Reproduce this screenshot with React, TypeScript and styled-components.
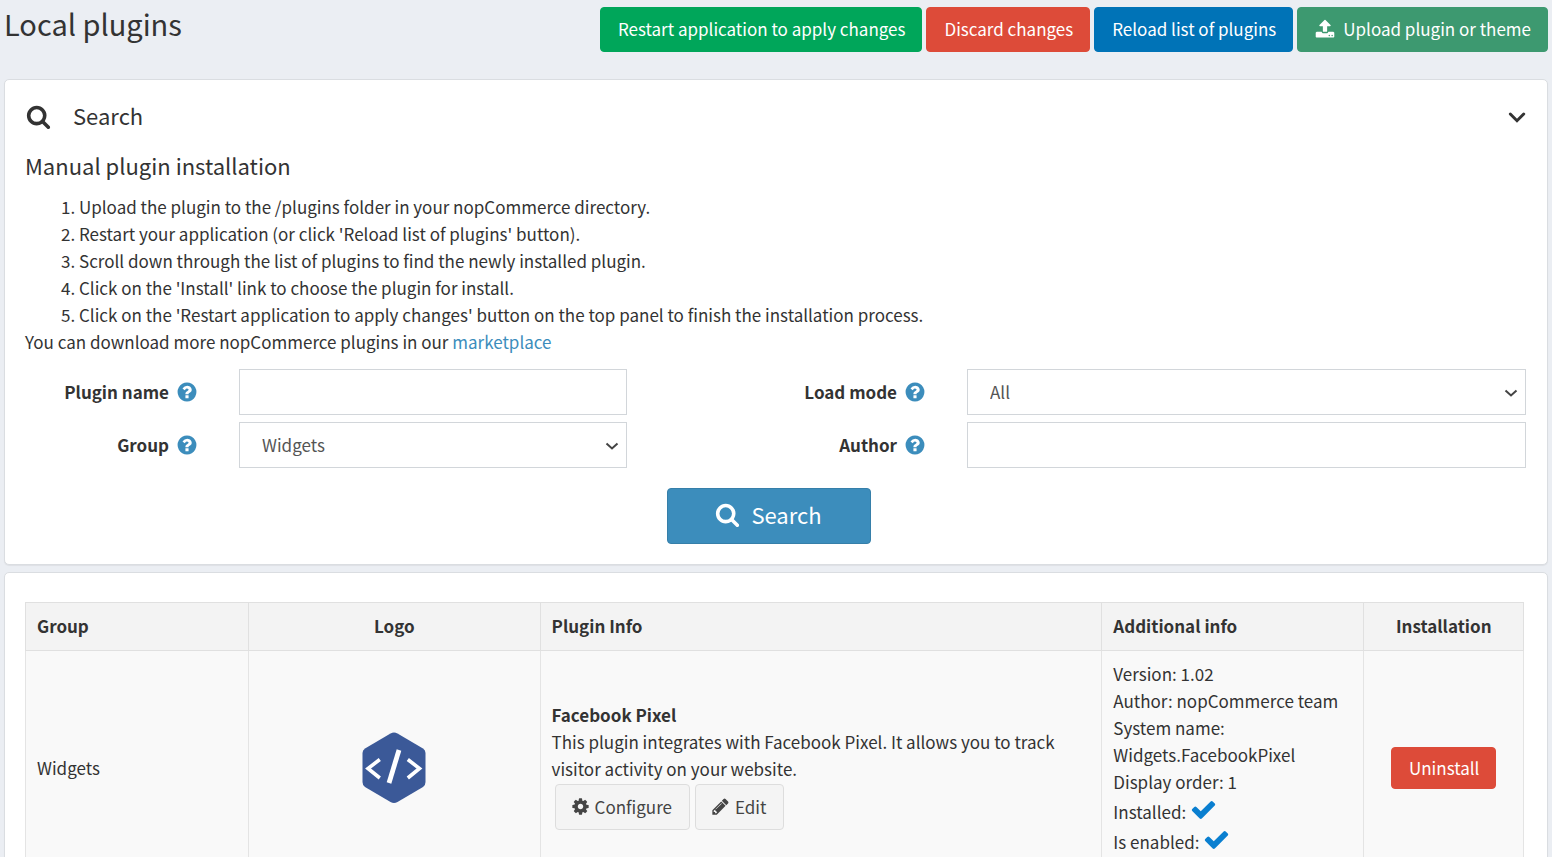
import React from "react";
import styled, { createGlobalStyle, css } from "styled-components";

const GlobalStyle = createGlobalStyle`
  *, *::before, *::after { box-sizing: border-box; }
  body {
    margin: 0;
    background: #ebeef3;
    color: #333;
    font-family: "Source Sans Pro", "Noto Sans CJK SC", "Noto Sans", sans-serif;
    font-size: 17px;
    line-height: 27px;
  }
  button, input, select { font: inherit; }
`;

const ICONS = {
  search:
    "M1216 832q0-185-131.5-316.5t-316.5-131.5-316.5 131.5-131.5 316.5 131.5 316.5 316.5 131.5 316.5-131.5 131.5-316.5zm512 832q0 52-38 90t-90 38q-54 0-90-38l-343-342q-179 124-399 124-143 0-273.5-55.5t-225-150-150-225-55.5-273.5 55.5-273.5 150-225 225-150 273.5-55.5 273.5 55.5 225 150 150 225 55.5 273.5q0 220-124 399l343 343q37 37 37 90z",
  upload:
    "M1344 1472q0-26-19-45t-45-19-45 19-19 45 19 45 45 19 45-19 19-45zm256 0q0-26-19-45t-45-19-45 19-19 45 19 45 45 19 45-19 19-45zm128-224v320q0 40-28 68t-68 28h-1472q-40 0-68-28t-28-68v-320q0-40 28-68t68-28h427q21 56 70.5 92t110.5 36h256q61 0 110.5-36t70.5-92h427q40 0 68 28t28 68zm-325-648q-17 40-59 40h-256v448q0 26-19 45t-45 19h-256q-26 0-45-19t-19-45v-448h-256q-42 0-59-40-17-39 14-69l448-448q18-19 45-19t45 19l448 448q31 30 14 69z",
  question:
    "M1024 1376v-192q0-14-9-23t-23-9h-192q-14 0-23 9t-9 23v192q0 14 9 23t23 9h192q14 0 23-9t9-23zm256-672q0-88-55.5-163t-138.5-116-170-41q-243 0-371 213-15 24 8 42l132 100q7 6 19 6 16 0 25-12 53-68 86-92 34-24 86-24 48 0 85.5 26t37.5 59q0 38-20 61t-68 45q-63 28-115.5 86.5t-52.5 125.5v36q0 14 9 23t23 9h192q14 0 23-9t9-23q0-19 21.5-49.5t54.5-49.5q32-18 49-28.5t46-35 44.5-48 28-60.5 12.5-81zm384 192q0 209-103 385.5t-279.5 279.5-385.5 103-385.5-103-279.5-279.5-103-385.5 103-385.5 279.5-279.5 385.5-103 385.5 103 279.5 279.5 103 385.5z",
  cog:
    "M1152 896q0-106-75-181t-181-75-181 75-75 181 75 181 181 75 181-75 75-181zm512-109v222q0 12-8 23t-20 13l-185 28q-19 54-39 91 35 50 107 138 10 12 10 25t-9 23q-27 37-99 108t-94 71q-12 0-26-9l-138-108q-44 23-91 38-16 136-29 186-7 28-36 28h-222q-14 0-24.5-8.5t-11.5-21.5l-28-184q-49-16-90-37l-141 107q-10 9-25 9-14 0-25-11-126-114-165-168-7-10-7-23 0-12 8-23 15-21 51-66.5t54-70.5q-27-50-41-99l-183-27q-13-2-21-12.5t-8-23.5v-222q0-12 8-23t19-13l186-28q14-46 39-92-40-57-107-138-10-12-10-24 0-10 9-23 26-36 98.5-107.5t94.5-71.5q13 0 26 10l138 107q44-23 91-38 16-136 29-186 7-28 36-28h222q14 0 24.5 8.5t11.5 21.5l28 184q49 16 90 37l142-107q9-9 24-9 13 0 25 10 129 119 165 170 7 8 7 22 0 12-8 23-15 21-51 66.5t-54 70.5q26 50 41 98l183 28q13 2 21 12.5t8 23.5z",
  pencil:
    "M491 1536l91-91-235-235-91 91v107h128v128h107zm523-928q0-22-22-22-10 0-17 7l-542 542q-7 7-7 17 0 22 22 22 10 0 17-7l542-542q7-7 7-17zm-54-192l416 416-832 832h-416v-416zm683 96q0 53-37 90l-166 166-416-416 166-165q36-38 90-38 53 0 91 38l235 234q37 39 37 91z",
  check:
    "M1671 566q0 40-28 68l-724 724-136 136q-28 28-68 28t-68-28l-136-136-362-362q-28-28-28-68t28-68l136-136q28-28 68-28t68 28l294 295 656-657q28-28 68-28t68 28l136 136q28 28 28 68z",
};

const Svg = styled.svg`
  flex: none;
  fill: currentColor;
`;

function Icon({ name, size }: { name: keyof typeof ICONS; size: number }) {
  return (
    <Svg width={size} height={size} viewBox="0 0 1792 1792" aria-hidden="true">
      <path d={ICONS[name]} />
    </Svg>
  );
}

const Page = styled.main`
  display: flex;
  flex-direction: column;
  gap: 7px;
  height: 100vh;
  padding: 0 4px;
  overflow: hidden;
`;

const Header = styled.header`
  display: flex;
  flex: none;
  justify-content: space-between;
  align-items: flex-start;
  padding: 7px 0 20px;
`;

const Title = styled.h1`
  margin: 0;
  font-size: 29px;
  font-weight: 400;
  line-height: 32px;
`;

const Actions = styled.div`
  display: flex;
  gap: 4px;
`;

type Tone = "success" | "danger" | "primary" | "upload" | "info" | "plain";

const tones: Record<Tone, [string, string, string]> = {
  success: ["#00a65a", "#00a65a", "#fff"],
  danger: ["#dd4b39", "#dd4b39", "#fff"],
  primary: ["#0073b7", "#0073b7", "#fff"],
  upload: ["#3d9970", "#3d9970", "#fff"],
  info: ["#3c8dbc", "#367fa9", "#fff"],
  plain: ["#f4f4f4", "#ddd", "#444"],
};

const sizes = {
  small: css`
    padding: 6px 16px 7px 17px;
  `,
  medium: css`
    gap: 8px;
    padding: 7px 16px 9px 17px;
  `,
  inline: css`
    gap: 5px;
    padding: 8px 17px 9px 15px;
  `,
  large: css`
    gap: 11px;
    padding: 12px 48px 16px 47px;
    font-size: 22px;
    line-height: 26px;
  `,
};

const Button = styled.button<{ $tone: Tone; $size?: keyof typeof sizes }>`
  display: inline-flex;
  align-items: center;
  border: 1px solid ${(p) => tones[p.$tone][1]};
  border-radius: 4px;
  background: ${(p) => tones[p.$tone][0]};
  color: ${(p) => tones[p.$tone][2]};
  white-space: nowrap;
  cursor: pointer;
  ${(p) => sizes[p.$size ?? "medium"]}
`;

const Panel = styled.section`
  flex: none;
  padding: 20px 21px 20px 20px;
  border: 1px solid #dadde1;
  border-radius: 5px;
  background: #fff;
  box-shadow: 0 1px 1px rgba(0, 0, 0, 0.06);
`;

const PanelToggle = styled.button`
  display: flex;
  align-items: center;
  gap: 22px;
  width: 100%;
  padding: 0 0 0 1px;
  border: 0;
  background: none;
  color: inherit;
  font-size: 22px;
  line-height: 30px;
  text-align: left;
  cursor: pointer;
`;

const ToggleLabel = styled.span`
  flex: 1;
  padding-bottom: 2px;
`;

const Subheading = styled.h2`
  margin: 17px 0 12px;
  font-size: 22px;
  font-weight: 400;
  line-height: 32px;
`;

const Steps = styled.ol`
  margin: 0;
  padding-left: 54px;
`;

const Text = styled.p`
  margin: 0;
`;

const Link = styled.a`
  color: #3c8dbc;
  text-decoration: none;
`;

const Filters = styled.form`
  display: grid;
  grid-template-columns: 173px 388px minmax(0, 258px) minmax(0, 1fr);
  column-gap: 41px;
  row-gap: 7px;
  align-items: center;
  margin-top: 14px;
`;

const FieldLabel = styled.label`
  display: flex;
  justify-content: flex-end;
  align-items: center;
  gap: 7px;
  font-weight: 700;

  svg {
    color: #3c8dbc;
  }
`;

const LabelText = styled.span`
  padding-bottom: 2px;
`;

const control = css`
  width: 100%;
  height: 46px;
  border: 1px solid #d2d6da;
  border-radius: 0;
  background: #fff;
  color: #555;
`;

const TextInput = styled.input`
  ${control}
  padding: 0 16px;
`;

const SelectWrap = styled.div`
  display: grid;
  align-items: center;

  > * {
    grid-area: 1 / 1;
  }

  > svg {
    justify-self: end;
    margin-right: 8px;
    pointer-events: none;
  }
`;

const Select = styled.select`
  ${control}
  padding: 0 22px 2px;
  appearance: none;
`;

const SubmitRow = styled.div`
  display: flex;
  grid-column: 1 / -1;
  justify-content: center;
  margin: 13px 13px 0 0;
`;

const TablePanel = styled(Panel)`
  padding: 29px 23px 20px 20px;
`;

const Table = styled.table`
  width: 100%;
  border-collapse: collapse;
  table-layout: fixed;
`;

const HeadCell = styled.th<{ $center?: boolean }>`
  height: 48px;
  padding: 9px 11px 11px;
  border: 1px solid #e0e0e0;
  background: #f3f3f3;
  text-align: ${(p) => (p.$center ? "center" : "left")};
`;

const Row = styled.tr`
  height: 236px;
`;

const Cell = styled.td<{ $center?: boolean; $top?: boolean }>`
  padding: 9px 11px 11px;
  border: 1px solid #e4e4e4;
  background: #f9f9f9;
  text-align: ${(p) => (p.$center ? "center" : "left")};
  vertical-align: ${(p) => (p.$top ? "top" : "middle")};

  > svg {
    display: block;
    margin: 0 auto;
  }
`;

const CellActions = styled.div`
  display: flex;
  gap: 5px;
  padding: 2px 3px 4px;
`;

const Status = styled.div`
  display: flex;
  align-items: center;
  gap: 4px;
  height: 30px;
  padding-top: 2px;

  svg {
    margin-bottom: 4px;
    color: #0a7fd0;
  }
`;

function HeaderChevron() {
  return (
    <svg width="18" height="18" viewBox="0 0 18 18" aria-hidden="true">
      <path d="M2.300 7 L9 13.700 L15.700 7" fill="none" stroke="currentColor" strokeWidth="3" strokeLinecap="round" />
    </svg>
  );
}

function SelectChevron() {
  return (
    <svg width="14" height="14" viewBox="0 0 14 14" aria-hidden="true">
      <path d="M1.500 5.500 L7 10.500 L12.500 5.500" fill="none" stroke="#444" strokeWidth="2" />
    </svg>
  );
}

function PluginLogo() {
  return (
    <svg width="64" height="72" viewBox="0 0 64 72" role="img" aria-label="Facebook Pixel">
      <path
        d="M28.500 1.500 Q32 -0.500 35.500 1.500 L61 16.500 Q63.500 18 63.500 21 V50 Q63.500 53.500 61 55 L35.500 70 Q32 72 28.500 70 L3 55 Q0.500 53.500 0.500 50 V21 Q0.500 18 3 16.500 Z"
        fill="#3b5998"
      />
      <g fill="none" stroke="#fff" strokeWidth="3.600">
        <path d="M17.800 27.500 L6 36.500 L17.800 46" />
        <path d="M45.800 27.500 L57.500 36.500 L45.800 46" />
        <path d="M37 18 L27 51" strokeWidth="4.800" />
      </g>
    </svg>
  );
}

const steps = [
  "Upload the plugin to the /plugins folder in your nopCommerce directory.",
  "Restart your application (or click 'Reload list of plugins' button).",
  "Scroll down through the list of plugins to find the newly installed plugin.",
  "Click on the 'Install' link to choose the plugin for install.",
  "Click on the 'Restart application to apply changes' button on the top panel to finish the installation process.",
];

function Label({ htmlFor, children }: { htmlFor: string; children: string }) {
  return (
    <FieldLabel htmlFor={htmlFor}>
      <LabelText>{children}</LabelText>
      <Icon name="question" size={22} />
    </FieldLabel>
  );
}

export default function App() {
  return (
    <>
      <GlobalStyle />
      <Page>
        <Header>
          <Title>Local plugins</Title>
          <Actions>
            <Button type="button" $tone="success">Restart application to apply changes</Button>
            <Button type="button" $tone="danger">Discard changes</Button>
            <Button type="button" $tone="primary">Reload list of plugins</Button>
            <Button type="button" $tone="upload">
              <Icon name="upload" size={20} />
              Upload plugin or theme
            </Button>
          </Actions>
        </Header>

        <Panel>
          <PanelToggle type="button" aria-expanded="true">
            <Icon name="search" size={25} />
            <ToggleLabel>Search</ToggleLabel>
            <HeaderChevron />
          </PanelToggle>
          <Subheading>Manual plugin installation</Subheading>
          <Steps>
            {steps.map((step) => (
              <li key={step}>{step}</li>
            ))}
          </Steps>
          <Text>
            You can download more nopCommerce plugins in our <Link href="#marketplace">marketplace</Link>
          </Text>

          <Filters onSubmit={(event) => event.preventDefault()}>
            <Label htmlFor="plugin-name">Plugin name</Label>
            <TextInput id="plugin-name" type="text" />
            <Label htmlFor="load-mode">Load mode</Label>
            <SelectWrap>
              <Select id="load-mode" defaultValue="All">
                <option>All</option>
              </Select>
              <SelectChevron />
            </SelectWrap>
            <Label htmlFor="group">Group</Label>
            <SelectWrap>
              <Select id="group" defaultValue="Widgets">
                <option>Widgets</option>
              </Select>
              <SelectChevron />
            </SelectWrap>
            <Label htmlFor="author">Author</Label>
            <TextInput id="author" type="text" />
            <SubmitRow>
              <Button type="submit" $tone="info" $size="large">
                <Icon name="search" size={25} />
                Search
              </Button>
            </SubmitRow>
          </Filters>
        </Panel>

        <TablePanel>
          <Table>
            <colgroup>
              <col style={{ width: "14.9%" }} />
              <col style={{ width: "19.45%" }} />
              <col style={{ width: "37.5%" }} />
              <col style={{ width: "17.5%" }} />
              <col />
            </colgroup>
            <thead>
              <tr>
                <HeadCell>Group</HeadCell>
                <HeadCell $center>Logo</HeadCell>
                <HeadCell>Plugin Info</HeadCell>
                <HeadCell>Additional info</HeadCell>
                <HeadCell $center>Installation</HeadCell>
              </tr>
            </thead>
            <tbody>
              <Row>
                <Cell>Widgets</Cell>
                <Cell $center>
                  <PluginLogo />
                </Cell>
                <Cell>
                  <strong>Facebook Pixel</strong>
                  <Text>
                    This plugin integrates with Facebook Pixel. It allows you to track visitor activity on your
                    website.
                  </Text>
                  <CellActions>
                    <Button type="button" $tone="plain" $size="inline">
                      <Icon name="cog" size={19} />
                      Configure
                    </Button>
                    <Button type="button" $tone="plain" $size="inline">
                      <Icon name="pencil" size={19} />
                      Edit
                    </Button>
                  </CellActions>
                </Cell>
                <Cell $top>
                  <div>Version: 1.02</div>
                  <div>Author: nopCommerce team</div>
                  <div>System name: Widgets.FacebookPixel</div>
                  <div>Display order: 1</div>
                  <Status>
                    Installed: <Icon name="check" size={27} />
                  </Status>
                  <Status>
                    Is enabled: <Icon name="check" size={27} />
                  </Status>
                </Cell>
                <Cell $center>
                  <Button type="button" $tone="danger" $size="small">Uninstall</Button>
                </Cell>
              </Row>
            </tbody>
          </Table>
        </TablePanel>
      </Page>
    </>
  );
}
